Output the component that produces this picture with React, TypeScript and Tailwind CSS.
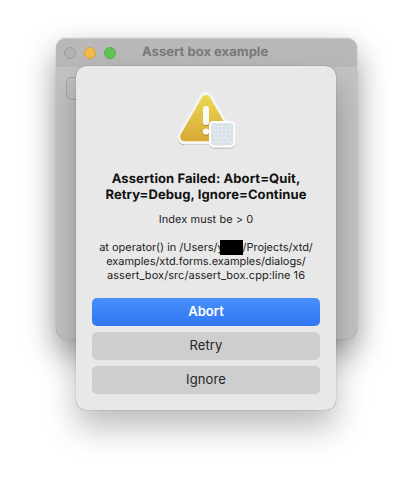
import React from "react";

function WarningIcon() {
  return (
    <svg width="64" height="64" viewBox="0 0 64 64" className="block shrink-0 overflow-visible" aria-hidden="true">
      <defs>
        <linearGradient id="gold" gradientUnits="userSpaceOnUse" x1="0" y1="12" x2="0" y2="58">
          <stop offset="0" stopColor="#ecd952" />
          <stop offset="1" stopColor="#d8a835" />
        </linearGradient>
        <filter id="soft" x="-20%" y="-20%" width="140%" height="140%">
          <feDropShadow dx="0" dy="0.8" stdDeviation="0.7" floodColor="#000" floodOpacity="0.35" />
        </filter>
      </defs>
      <g filter="url(#soft)">
        <path d="M32 15.8 L53.5 54.3 H10.5 Z" fill="#f5f5f5" stroke="#f5f5f5" strokeWidth="14" strokeLinejoin="round" />
      </g>
      <path d="M32 16.5 L53.4 53.7 H10.6 Z" fill="url(#gold)" stroke="url(#gold)" strokeWidth="9" strokeLinejoin="round" />
      <g filter="url(#soft)" fill="#fafafa">
        <rect x="29" y="23" width="6" height="19" rx="3" />
        <circle cx="32" cy="48.5" r="3.1" />
      </g>
      <g filter="url(#soft)">
        <rect x="35" y="38" width="26.4" height="26.4" rx="4.5" fill="#fdfdfd" />
      </g>
      <rect x="37.2" y="40.2" width="22" height="22" rx="2" fill="#d3dfe5" />
      <g fill="none" stroke="#e9f0f2" strokeWidth="0.5" transform="translate(-0.8 -0.8)">
        <path d="M41 41v22M44.5 41v22M49 41v22M53.5 41v22M57 41v22M38 44h22M38 47.5h22M38 52h22M38 56.5h22M38 60h22M38 41l22 22M60 41L38 63" />
        <circle cx="49" cy="52" r="4" />
        <circle cx="49" cy="52" r="8" />
      </g>
    </svg>
  );
}

function SheetButton({ label, primary = false }: { label: string; primary?: boolean }) {
  return (
    <button
      className={
        primary
          ? "h-7 w-full rounded-[5px] bg-linear-to-b from-[#488ff8] to-[#3276f6] pb-px text-[13px] leading-[27px] font-semibold text-white"
          : "h-7 w-full rounded-[5px] bg-[#cecece] pb-px text-[13px] leading-[27px] tracking-[0.1px] text-[#252525]"
      }
    >
      {label}
    </button>
  );
}

function AssertSheet() {
  return (
    <div className="absolute top-[28px] left-[20px] flex h-[344px] w-[260px] flex-col items-center rounded-[10px] bg-[#e8e8e8] px-4 pt-[17px] shadow-[0_0_1px_rgba(0,0,0,0.55),0_18px_32px_rgba(0,0,0,0.26)]">
      <WarningIcon />
      <h1 className="mt-6 flex flex-col items-center text-[13px] leading-4 font-bold tracking-[0.09px] whitespace-nowrap text-[#111]">
        <span>Assertion Failed: Abort=Quit,</span>
        <span>Retry=Debug, Ignore=Continue</span>
      </h1>
      <p className="mt-[9px] text-[11px] leading-[14px] tracking-[0.06px] whitespace-nowrap text-[#222]">Index must be &gt; 0</p>
      <p className="mt-[14px] flex flex-col items-center text-[11px] leading-[14px] whitespace-nowrap text-[#222]">
        <span className="flex tracking-[-0.02px]">
          at operator() in /Users/
          <span className="relative h-[14px] w-[25px]">
            y<span className="absolute top-0 left-[2px] h-[15px] w-[23px] bg-black" />
          </span>
          /Projects/xtd/
        </span>
        <span className="tracking-[-0.05px]">examples/xtd.forms.examples/dialogs/</span>
        <span className="tracking-[0.06px]">assert_box/src/assert_box.cpp:line 16</span>
      </p>
      <div className="mt-auto mb-4 flex w-full flex-col gap-1.5">
        <SheetButton label="Abort" primary />
        <SheetButton label="Retry" />
        <SheetButton label="Ignore" />
      </div>
    </div>
  );
}

export default function App() {
  return (
    <main className="h-[484px] w-[412px] overflow-hidden bg-white pt-[38px] pl-14 font-[Inter,'Liberation_Sans',sans-serif] [text-rendering:geometricPrecision]">
      <div className="relative h-[301px] w-[301px] rounded-[10px] bg-[#c3c3c3] shadow-[0_0_1px_rgba(0,0,0,0.35),0_14px_32px_rgba(0,0,0,0.4)]">
        <header className="flex h-[29px] items-center rounded-t-[10px] border-t border-[#c8c8c8] bg-[#b8b8b8] pb-px pl-2">
          <div className="flex gap-2">
            <i className="size-3 rounded-full border border-[#9c9c9c] bg-[#b3b3b3]" />
            <i className="size-3 rounded-full border border-[#dda43f] bg-[#f2ba4c]" />
            <i className="size-3 rounded-full border border-[#54b148] bg-[#60c454]" />
          </div>
          <span className="ml-[26px] text-[13px] font-bold tracking-[0.03px] whitespace-nowrap text-[#7a7a7a]">Assert box example</span>
        </header>
        <div className="mt-[10px] ml-[10px] h-[23px] w-20 rounded-[5px] border border-[#a4a4a4] bg-[#c0c0c0]" />
        <AssertSheet />
      </div>
    </main>
  );
}
